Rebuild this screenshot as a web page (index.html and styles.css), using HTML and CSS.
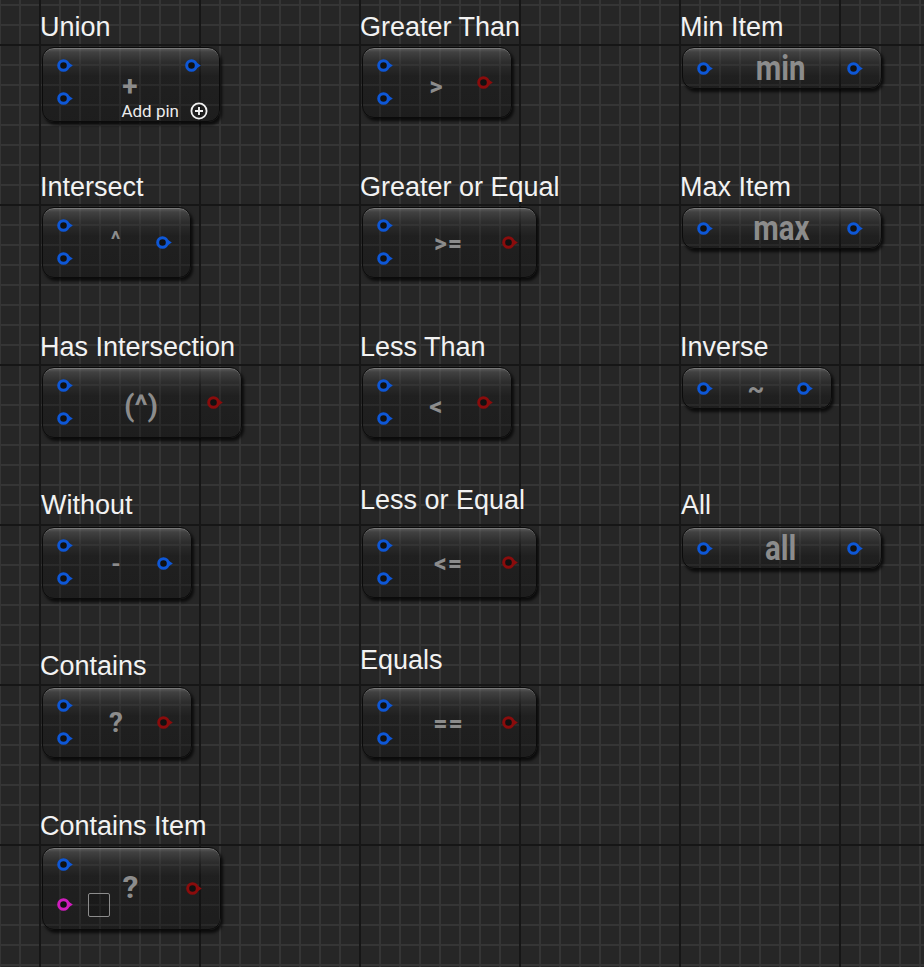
FILE: index.html
```html
<!DOCTYPE html>
<html lang="en">
<head>
<meta charset="utf-8">
<title>Set operation nodes</title>
<link rel="stylesheet" href="styles.css">
</head>
<body>
<main class="canvas">
  <section class="col">
    <div class="cell">
      <h2 class="title">Union</h2>
      <div class="node w178 h75">
        <div class="pins in">
          <svg class="pin blue" viewBox="0 0 18 13"><circle cx="6.5" cy="6.5" r="4.8"/><path d="M11.4 3.5 L15.8 6.5 L11.4 9.5Z"/></svg>
          <svg class="pin blue" viewBox="0 0 18 13"><circle cx="6.5" cy="6.5" r="4.8"/><path d="M11.4 3.5 L15.8 6.5 L11.4 9.5Z"/></svg>
        </div>
        <div class="union-body">
          <div class="union-top">
            <span class="sym s-plus">+</span>
            <div class="pins out top">
              <svg class="pin blue" viewBox="0 0 18 13"><circle cx="6.5" cy="6.5" r="4.8"/><path d="M11.4 3.5 L15.8 6.5 L11.4 9.5Z"/></svg>
            </div>
          </div>
          <div class="addpin">
            <span>Add pin</span>
            <svg class="addicon" viewBox="0 0 18 18"><circle cx="9" cy="9" r="7.6"/><path d="M9 5 V13 M5 9 H13"/></svg>
          </div>
        </div>
      </div>
    </div>
    <div class="cell">
      <h2 class="title">Intersect</h2>
      <div class="node w149 h71">
        <div class="pins in">
          <svg class="pin blue" viewBox="0 0 18 13"><circle cx="6.5" cy="6.5" r="4.8"/><path d="M11.4 3.5 L15.8 6.5 L11.4 9.5Z"/></svg>
          <svg class="pin blue" viewBox="0 0 18 13"><circle cx="6.5" cy="6.5" r="4.8"/><path d="M11.4 3.5 L15.8 6.5 L11.4 9.5Z"/></svg>
        </div>
        <div class="sym s-caret">^</div>
        <div class="pins out">
          <svg class="pin blue" viewBox="0 0 18 13"><circle cx="6.5" cy="6.5" r="4.8"/><path d="M11.4 3.5 L15.8 6.5 L11.4 9.5Z"/></svg>
        </div>
      </div>
    </div>
    <div class="cell">
      <h2 class="title">Has Intersection</h2>
      <div class="node w200 h71">
        <div class="pins in">
          <svg class="pin blue" viewBox="0 0 18 13"><circle cx="6.5" cy="6.5" r="4.8"/><path d="M11.4 3.5 L15.8 6.5 L11.4 9.5Z"/></svg>
          <svg class="pin blue" viewBox="0 0 18 13"><circle cx="6.5" cy="6.5" r="4.8"/><path d="M11.4 3.5 L15.8 6.5 L11.4 9.5Z"/></svg>
        </div>
        <div class="sym s-paren">(^)</div>
        <div class="pins out">
          <svg class="pin red" viewBox="0 0 18 13"><circle cx="6.5" cy="6.5" r="4.8"/><path d="M11.4 3.5 L15.8 6.5 L11.4 9.5Z"/></svg>
        </div>
      </div>
    </div>
    <div class="cell">
      <h2 class="title t-row3">Without</h2>
      <div class="node w150 h72">
        <div class="pins in">
          <svg class="pin blue" viewBox="0 0 18 13"><circle cx="6.5" cy="6.5" r="4.8"/><path d="M11.4 3.5 L15.8 6.5 L11.4 9.5Z"/></svg>
          <svg class="pin blue" viewBox="0 0 18 13"><circle cx="6.5" cy="6.5" r="4.8"/><path d="M11.4 3.5 L15.8 6.5 L11.4 9.5Z"/></svg>
        </div>
        <div class="sym s-minus">-</div>
        <div class="pins out">
          <svg class="pin blue" viewBox="0 0 18 13"><circle cx="6.5" cy="6.5" r="4.8"/><path d="M11.4 3.5 L15.8 6.5 L11.4 9.5Z"/></svg>
        </div>
      </div>
    </div>
    <div class="cell">
      <h2 class="title t-row4">Contains</h2>
      <div class="node w150 h71">
        <div class="pins in">
          <svg class="pin blue" viewBox="0 0 18 13"><circle cx="6.5" cy="6.5" r="4.8"/><path d="M11.4 3.5 L15.8 6.5 L11.4 9.5Z"/></svg>
          <svg class="pin blue" viewBox="0 0 18 13"><circle cx="6.5" cy="6.5" r="4.8"/><path d="M11.4 3.5 L15.8 6.5 L11.4 9.5Z"/></svg>
        </div>
        <div class="sym s-q">?</div>
        <div class="pins out">
          <svg class="pin red" viewBox="0 0 18 13"><circle cx="6.5" cy="6.5" r="4.8"/><path d="M11.4 3.5 L15.8 6.5 L11.4 9.5Z"/></svg>
        </div>
      </div>
    </div>
    <div class="cell">
      <h2 class="title t-row4">Contains Item</h2>
      <div class="node w179 h83">
        <div class="pins in wide">
          <svg class="pin blue" viewBox="0 0 18 13"><circle cx="6.5" cy="6.5" r="4.8"/><path d="M11.4 3.5 L15.8 6.5 L11.4 9.5Z"/></svg>
          <svg class="pin magenta" viewBox="0 0 18 13"><circle cx="6.5" cy="6.5" r="4.8"/><path d="M11.4 3.5 L15.8 6.5 L11.4 9.5Z"/></svg>
        </div>
        <div class="sym item-sym">
          <span class="itembox"></span>
          <span class="s-qbig">?</span>
        </div>
        <div class="pins out">
          <svg class="pin red" viewBox="0 0 18 13"><circle cx="6.5" cy="6.5" r="4.8"/><path d="M11.4 3.5 L15.8 6.5 L11.4 9.5Z"/></svg>
        </div>
      </div>
    </div>
  </section>

  <section class="col">
    <div class="cell">
      <h2 class="title">Greater Than</h2>
      <div class="node w150 h71">
        <div class="pins in">
          <svg class="pin blue" viewBox="0 0 18 13"><circle cx="6.5" cy="6.5" r="4.8"/><path d="M11.4 3.5 L15.8 6.5 L11.4 9.5Z"/></svg>
          <svg class="pin blue" viewBox="0 0 18 13"><circle cx="6.5" cy="6.5" r="4.8"/><path d="M11.4 3.5 L15.8 6.5 L11.4 9.5Z"/></svg>
        </div>
        <div class="sym s-cmp">&gt;</div>
        <div class="pins out">
          <svg class="pin red" viewBox="0 0 18 13"><circle cx="6.5" cy="6.5" r="4.8"/><path d="M11.4 3.5 L15.8 6.5 L11.4 9.5Z"/></svg>
        </div>
      </div>
    </div>
    <div class="cell">
      <h2 class="title">Greater or Equal</h2>
      <div class="node w175 h71">
        <div class="pins in">
          <svg class="pin blue" viewBox="0 0 18 13"><circle cx="6.5" cy="6.5" r="4.8"/><path d="M11.4 3.5 L15.8 6.5 L11.4 9.5Z"/></svg>
          <svg class="pin blue" viewBox="0 0 18 13"><circle cx="6.5" cy="6.5" r="4.8"/><path d="M11.4 3.5 L15.8 6.5 L11.4 9.5Z"/></svg>
        </div>
        <div class="sym s-cmp2">&gt;=</div>
        <div class="pins out">
          <svg class="pin red" viewBox="0 0 18 13"><circle cx="6.5" cy="6.5" r="4.8"/><path d="M11.4 3.5 L15.8 6.5 L11.4 9.5Z"/></svg>
        </div>
      </div>
    </div>
    <div class="cell">
      <h2 class="title">Less Than</h2>
      <div class="node w150 h71">
        <div class="pins in">
          <svg class="pin blue" viewBox="0 0 18 13"><circle cx="6.5" cy="6.5" r="4.8"/><path d="M11.4 3.5 L15.8 6.5 L11.4 9.5Z"/></svg>
          <svg class="pin blue" viewBox="0 0 18 13"><circle cx="6.5" cy="6.5" r="4.8"/><path d="M11.4 3.5 L15.8 6.5 L11.4 9.5Z"/></svg>
        </div>
        <div class="sym s-cmp">&lt;</div>
        <div class="pins out">
          <svg class="pin red" viewBox="0 0 18 13"><circle cx="6.5" cy="6.5" r="4.8"/><path d="M11.4 3.5 L15.8 6.5 L11.4 9.5Z"/></svg>
        </div>
      </div>
    </div>
    <div class="cell">
      <h2 class="title t-up">Less or Equal</h2>
      <div class="node w175 h71">
        <div class="pins in">
          <svg class="pin blue" viewBox="0 0 18 13"><circle cx="6.5" cy="6.5" r="4.8"/><path d="M11.4 3.5 L15.8 6.5 L11.4 9.5Z"/></svg>
          <svg class="pin blue" viewBox="0 0 18 13"><circle cx="6.5" cy="6.5" r="4.8"/><path d="M11.4 3.5 L15.8 6.5 L11.4 9.5Z"/></svg>
        </div>
        <div class="sym s-cmp2">&lt;=</div>
        <div class="pins out">
          <svg class="pin red" viewBox="0 0 18 13"><circle cx="6.5" cy="6.5" r="4.8"/><path d="M11.4 3.5 L15.8 6.5 L11.4 9.5Z"/></svg>
        </div>
      </div>
    </div>
    <div class="cell">
      <h2 class="title t-up">Equals</h2>
      <div class="node w175 h71">
        <div class="pins in">
          <svg class="pin blue" viewBox="0 0 18 13"><circle cx="6.5" cy="6.5" r="4.8"/><path d="M11.4 3.5 L15.8 6.5 L11.4 9.5Z"/></svg>
          <svg class="pin blue" viewBox="0 0 18 13"><circle cx="6.5" cy="6.5" r="4.8"/><path d="M11.4 3.5 L15.8 6.5 L11.4 9.5Z"/></svg>
        </div>
        <div class="sym s-cmp2">==</div>
        <div class="pins out">
          <svg class="pin red" viewBox="0 0 18 13"><circle cx="6.5" cy="6.5" r="4.8"/><path d="M11.4 3.5 L15.8 6.5 L11.4 9.5Z"/></svg>
        </div>
      </div>
    </div>
  </section>

  <section class="col">
    <div class="cell">
      <h2 class="title">Min Item</h2>
      <div class="node w200 h42 compact">
        <div class="pins in">
          <svg class="pin blue" viewBox="0 0 18 13"><circle cx="6.5" cy="6.5" r="4.8"/><path d="M11.4 3.5 L15.8 6.5 L11.4 9.5Z"/></svg>
        </div>
        <div class="sym s-word"><span>min</span></div>
        <div class="pins out">
          <svg class="pin blue" viewBox="0 0 18 13"><circle cx="6.5" cy="6.5" r="4.8"/><path d="M11.4 3.5 L15.8 6.5 L11.4 9.5Z"/></svg>
        </div>
      </div>
    </div>
    <div class="cell">
      <h2 class="title">Max Item</h2>
      <div class="node w200 h42 compact">
        <div class="pins in">
          <svg class="pin blue" viewBox="0 0 18 13"><circle cx="6.5" cy="6.5" r="4.8"/><path d="M11.4 3.5 L15.8 6.5 L11.4 9.5Z"/></svg>
        </div>
        <div class="sym s-word"><span>max</span></div>
        <div class="pins out">
          <svg class="pin blue" viewBox="0 0 18 13"><circle cx="6.5" cy="6.5" r="4.8"/><path d="M11.4 3.5 L15.8 6.5 L11.4 9.5Z"/></svg>
        </div>
      </div>
    </div>
    <div class="cell">
      <h2 class="title">Inverse</h2>
      <div class="node w150 h42 compact">
        <div class="pins in">
          <svg class="pin blue" viewBox="0 0 18 13"><circle cx="6.5" cy="6.5" r="4.8"/><path d="M11.4 3.5 L15.8 6.5 L11.4 9.5Z"/></svg>
        </div>
        <div class="sym s-tilde">~</div>
        <div class="pins out">
          <svg class="pin blue" viewBox="0 0 18 13"><circle cx="6.5" cy="6.5" r="4.8"/><path d="M11.4 3.5 L15.8 6.5 L11.4 9.5Z"/></svg>
        </div>
      </div>
    </div>
    <div class="cell">
      <h2 class="title t-row3">All</h2>
      <div class="node w200 h42 compact">
        <div class="pins in">
          <svg class="pin blue" viewBox="0 0 18 13"><circle cx="6.5" cy="6.5" r="4.8"/><path d="M11.4 3.5 L15.8 6.5 L11.4 9.5Z"/></svg>
        </div>
        <div class="sym s-word"><span>all</span></div>
        <div class="pins out">
          <svg class="pin blue" viewBox="0 0 18 13"><circle cx="6.5" cy="6.5" r="4.8"/><path d="M11.4 3.5 L15.8 6.5 L11.4 9.5Z"/></svg>
        </div>
      </div>
    </div>
  </section>
</main>
</body>
</html>
```
FILE: styles.css
```css
html, body {
  margin: 0;
  padding: 0;
}

body {
  width: 924px;
  height: 967px;
  overflow: hidden;
  background-color: #262626;
  background-image:
    linear-gradient(to right, #161616 2px, transparent 2px),
    linear-gradient(to bottom, #161616 2px, transparent 2px),
    linear-gradient(to right, #353535 2px, transparent 2px),
    linear-gradient(to bottom, #353535 2px, transparent 2px);
  background-size: 160px 160px, 160px 160px, 20px 20px, 20px 20px;
  background-position: 39px 0, 0 44px, -1px 0, 0 4px;
  font-family: "Liberation Sans", Arial, sans-serif;
}

.canvas {
  display: flex;
  padding-left: 40px;
  width: 884px;
  overflow: hidden;
}

.col {
  flex: 0 0 320px;
  width: 320px;
  display: flex;
  flex-direction: column;
}

.col:last-child {
  flex: 0 0 244px;
  width: 244px;
}

.cell {
  height: 160px;
}

.title {
  margin: 0;
  box-sizing: border-box;
  height: 47px;
  padding-top: 12px;
  font-size: 27px;
  line-height: 30px;
  font-weight: 400;
  color: #f2f2f2;
  white-space: nowrap;
}

.title.t-row3 {
  padding-top: 10px;
  padding-left: 1px;
}

.title.t-row4 {
  padding-top: 11px;
}

.title.t-up {
  padding-top: 5px;
}

/* ---------- node ---------- */
.node {
  box-sizing: border-box;
  margin-left: 2px;
  display: flex;
  border: 1px solid #0b0b0b;
  border-radius: 12px;
  background:
    linear-gradient(to bottom,
      rgba(130, 130, 130, 0.62) 0px,
      rgba(90, 90, 90, 0.52) 4px,
      rgba(55, 55, 55, 0.42) 14px,
      rgba(14, 14, 14, 0.26) 28px,
      rgba(10, 10, 10, 0.3) 100%);
  box-shadow:
    inset 0 1px 0 rgba(170, 170, 170, 0.35),
    2px 3px 3px rgba(0, 0, 0, 0.7);
}

.w149 { width: 149px; }
.w150 { width: 150px; }
.w175 { width: 175px; }
.w178 { width: 178px; }
.w179 { width: 179px; }
.w200 { width: 200px; }
.h42 { height: 42px; }
.h71 { height: 71px; }
.h72 { height: 72px; }
.h75 { height: 75px; }
.h83 { height: 83px; }

.pins {
  display: flex;
  flex-direction: column;
}

.pins.in {
  gap: 20px;
  padding: 11px 0 0 14px;
}

.pins.in.wide {
  gap: 27px;
  padding-top: 10px;
}

.pins.out {
  justify-content: center;
  padding-right: 16px;
}

.pins.out.top {
  justify-content: flex-start;
  padding-top: 11px;
}

.compact .pins.in {
  padding-top: 0;
  justify-content: center;
}

.pin {
  width: 18px;
  height: 13px;
  display: block;
}

.pin circle {
  fill: #111111;
  stroke-width: 3;
}

.pin.blue circle { stroke: #0e57d6; }
.pin.blue path { fill: #0e57d6; }
.pin.red circle { stroke: #8a0c0c; }
.pin.red path { fill: #8a0c0c; }
.pin.magenta circle { stroke: #cf1dbd; }
.pin.magenta path { fill: #cf1dbd; }

/* ---------- symbols ---------- */
.sym {
  flex: 1;
  display: flex;
  align-items: center;
  justify-content: center;
  font-family: Roboto, "Liberation Sans", sans-serif;
  font-weight: 700;
  color: #8c8c8c;
  line-height: 1;
}

.s-cmp {
  font-size: 26px;
  padding-top: 6px;
}

.s-cmp2 {
  font-size: 25px;
  letter-spacing: 1px;
  padding-top: 1px;
}

.s-caret {
  font-size: 22px;
  padding-bottom: 6px;
}

.s-paren {
  font-size: 30px;
  padding-top: 7px;
}

.s-minus {
  font-size: 24px;
  padding-top: 2px;
}

.s-q {
  font-size: 28px;
  padding-top: 0;
}

.s-tilde {
  font-size: 26px;
  padding-top: 2px;
}

.s-word span {
  display: inline-block;
  font-size: 35px;
  transform: scaleX(0.84);
  padding-top: 1px;
}

/* Contains Item symbol */
.item-sym {
  display: grid;
  grid-template-columns: 1fr auto 1fr;
  align-items: center;
}

.itembox {
  justify-self: end;
  align-self: end;
  box-sizing: border-box;
  width: 22px;
  height: 24px;
  margin: 0 13px 12px 0;
  border: 1.5px solid #8c8c8c;
  border-radius: 2px;
  background: rgba(0, 0, 0, 0.15);
}

.s-qbig {
  font-size: 32px;
  padding-bottom: 4px;
}

/* Union */
.union-body {
  flex: 1;
  display: flex;
  flex-direction: column;
  justify-content: space-between;
}

.union-top {
  display: flex;
}

.s-plus {
  font-size: 28px;
  padding-top: 25px;
}

.addpin {
  display: flex;
  align-items: center;
  justify-content: flex-end;
  gap: 11px;
  padding: 0 11px 5px 0;
  font-family: Roboto, "Liberation Sans", sans-serif;
  font-size: 17px;
  line-height: 20px;
  color: #ececec;
}

.addicon {
  width: 18px;
  height: 18px;
  display: block;
}

.addicon circle {
  fill: none;
  stroke: #f0f0f0;
  stroke-width: 1.8;
}

.addicon path {
  stroke: #f0f0f0;
  stroke-width: 1.9;
}
```
